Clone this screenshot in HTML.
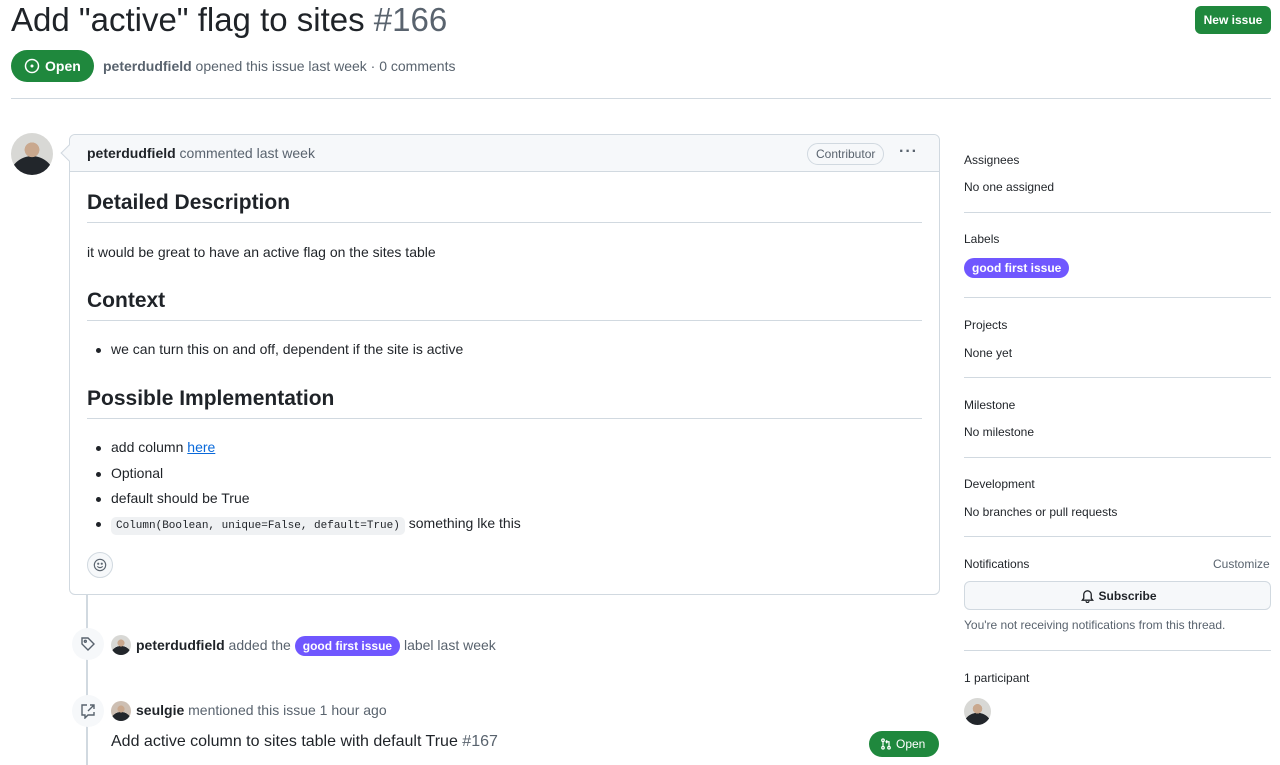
<!DOCTYPE html>
<html><head><meta charset="utf-8"><style>
*{box-sizing:border-box;margin:0;padding:0}
body{width:1280px;height:765px;overflow:hidden;background:#fff;font-family:"Liberation Sans",sans-serif;color:#1f2328;position:relative;font-size:14px}
.a{position:absolute;white-space:nowrap}
.g{color:#59636e}
b{font-weight:bold}
.lbl{background:#7057ff;color:#fff;border-radius:10px;font-size:12px;font-weight:bold;padding:2px 8px;display:inline-block;line-height:16px}
.av{border-radius:50%;background:radial-gradient(circle at 50% 40%,#c9a88e 0 22%,transparent 23%),radial-gradient(circle at 50% 110%,#22262b 0 45%,transparent 46%),#d8d8d5}
.hr{position:absolute;height:1px;background:#d1d9e0}
.sh{position:absolute;left:964px;font-size:12px;color:#1f2328}
.sv{position:absolute;left:964px;font-size:12px;color:#1f2328}
h2{position:absolute;left:87px;font-size:21px;font-weight:bold}
li{position:absolute;left:111px;font-size:14px;list-style:none}
li:before{content:"";position:absolute;left:-15px;top:7px;width:5px;height:5px;border-radius:50%;background:#1f2328}
code{font-family:"Liberation Mono",monospace;font-size:11px;background:#eff1f3;padding:3px 5px;border-radius:5px}
</style></head><body>
<div class="a" style="left:11px;top:1px;font-size:33px;">Add "active" flag to sites <span class="g" style="font-weight:300">#166</span></div>
<div class="a" style="left:1195px;top:6px;width:76px;height:28px;background:#1f883d;color:#fff;border-radius:6px;font-size:12px;font-weight:bold;text-align:center;line-height:28px">New issue</div>
<div class="a" style="left:11px;top:50px;width:83px;height:32px;background:#1f883d;border-radius:16px;color:#fff;font-weight:bold;font-size:14px;line-height:32px;padding-left:34px">Open
<svg style="position:absolute;left:13px;top:8px" width="16" height="16" viewBox="0 0 16 16"><circle cx="8" cy="8" r="6.5" fill="none" stroke="#fff" stroke-width="1.5"/><circle cx="8" cy="8" r="1.5" fill="#fff"/></svg></div>
<div class="a g" style="left:103px;top:58px;font-size:14px"><b style="color:#59636e">peterdudfield</b> opened this issue last week · 0 comments</div>
<div class="hr" style="left:11px;top:98px;width:1260px"></div>

<div class="a av" style="left:11px;top:133px;width:42px;height:42px"></div>
<div class="a" style="left:69px;top:134px;width:871px;height:461px;border:1px solid #d1d9e0;border-radius:6px"></div>
<div class="a" style="left:70px;top:135px;width:869px;height:37px;background:#f6f8fa;border-bottom:1px solid #d1d9e0;border-radius:6px 6px 0 0"></div>
<div class="a" style="left:63px;top:147px;width:12px;height:12px;background:#f6f8fa;border-left:1px solid #d1d9e0;border-bottom:1px solid #d1d9e0;transform:rotate(45deg)"></div>
<div class="a g" style="left:87px;top:145px"><b style="color:#1f2328">peterdudfield</b> commented last week</div>
<div class="a g" style="left:807px;top:143px;height:22px;border:1px solid #d1d9e0;border-radius:11px;font-size:12px;padding:0 8px;line-height:20px">Contributor</div>
<div class="a" style="left:899px;top:143px;font-size:16px;font-weight:bold;color:#59636e;letter-spacing:1px">···</div>

<h2 style="top:191px">Detailed Description</h2>
<div class="hr" style="left:87px;top:222px;width:835px"></div>
<div class="a" style="left:87px;top:244px">it would be great to have an active flag on the sites table</div>
<h2 style="top:289px">Context</h2>
<div class="hr" style="left:87px;top:320px;width:835px"></div>
<li style="top:341px">we can turn this on and off, dependent if the site is active</li>
<h2 style="top:387px">Possible Implementation</h2>
<div class="hr" style="left:87px;top:418px;width:835px"></div>
<li style="top:439px">add column <span style="color:#0969da;text-decoration:underline">here</span></li>
<li style="top:465px">Optional</li>
<li style="top:490px">default should be True</li>
<li style="top:515px"><code>Column(Boolean, unique=False, default=True)</code> something lke this</li>
<div class="a" style="left:87px;top:552px;width:26px;height:26px;border:1px solid #d1d9e0;border-radius:13px;background:#f6f8fa"><svg style="position:absolute;left:5px;top:5px" width="14" height="14" viewBox="0 0 16 16" fill="none" stroke="#59636e" stroke-width="1.3"><circle cx="8" cy="8" r="6.5"/><path d="M5 9.5c1.5 2 4.5 2 6 0"/><circle cx="6" cy="6.5" r=".6" fill="#59636e"/><circle cx="10" cy="6.5" r=".6" fill="#59636e"/></svg></div>

<div class="a" style="left:86px;top:595px;width:2px;height:170px;background:#d1d9e0"></div>
<div class="a" style="left:72px;top:628px;width:32px;height:32px;border-radius:50%;background:#f6f8fa"><svg style="position:absolute;left:8px;top:8px" width="16" height="16" viewBox="0 0 16 16" fill="none" stroke="#59636e" stroke-width="1.4"><path d="M2 2h6l6 6-6 6-6-6z"/><circle cx="5.3" cy="5.3" r="1"/></svg></div>
<div class="a av" style="left:111px;top:635px;width:20px;height:20px"></div>
<div class="a g" style="left:136px;top:636px"><b style="color:#1f2328">peterdudfield</b> added the <span class="lbl">good first issue</span> label last week</div>
<div class="a" style="left:72px;top:695px;width:32px;height:32px;border-radius:50%;background:#f6f8fa"><svg style="position:absolute;left:8px;top:8px" width="16" height="16" viewBox="0 0 16 16" fill="none" stroke="#59636e" stroke-width="1.4"><path d="M7 2H2v10h3v3l3-3h6V9M10 2h4v4M14 2L8 8"/></svg></div>
<div class="a av" style="left:111px;top:701px;width:20px;height:20px;background-color:#cdbfb3"></div>
<div class="a g" style="left:136px;top:702px"><b style="color:#1f2328">seulgie</b> mentioned this issue 1 hour ago</div>
<div class="a" style="left:111px;top:733px;font-size:16px">Add active column to sites table with default True <span class="g">#167</span></div>
<div class="a" style="left:869px;top:731px;width:70px;height:26px;background:#1f883d;border-radius:13px;color:#fff;font-size:12px;line-height:26px;padding-left:27px">Open<svg style="position:absolute;left:11px;top:7px" width="12" height="12" viewBox="0 0 16 16" fill="none" stroke="#fff" stroke-width="1.6"><circle cx="4" cy="3" r="1.7"/><circle cx="4" cy="13" r="1.7"/><circle cx="12" cy="13" r="1.7"/><path d="M4 5v6M12 11V5H8M9.5 3L8 5l1.5 2"/></svg></div>

<div class="sh" style="top:153px">Assignees</div>
<div class="sv" style="top:180px">No one assigned</div>
<div class="hr" style="left:964px;top:212px;width:307px"></div>
<div class="sh" style="top:232px">Labels</div>
<div class="a" style="left:964px;top:258px"><span class="lbl">good first issue</span></div>
<div class="hr" style="left:964px;top:297px;width:307px"></div>
<div class="sh" style="top:318px">Projects</div>
<div class="sv" style="top:346px">None yet</div>
<div class="hr" style="left:964px;top:377px;width:307px"></div>
<div class="sh" style="top:398px">Milestone</div>
<div class="sv" style="top:425px">No milestone</div>
<div class="hr" style="left:964px;top:457px;width:307px"></div>
<div class="sh" style="top:477px">Development</div>
<div class="sv" style="top:505px">No branches or pull requests</div>
<div class="hr" style="left:964px;top:536px;width:307px"></div>
<div class="sh" style="top:557px">Notifications</div>
<div class="a g" style="left:1213px;top:557px;font-size:12px">Customize</div>
<div class="a" style="left:964px;top:581px;width:307px;height:29px;border:1px solid #d1d9e0;border-radius:6px;background:#f6f8fa;font-size:12px;font-weight:bold;text-align:center;line-height:28px;padding-left:20px">Subscribe<svg style="position:absolute;left:115px;top:6px" width="15" height="15" viewBox="0 0 16 16" fill="none" stroke="#1f2328" stroke-width="1.4"><path d="M4 11V7a4 4 0 018 0v4l1.5 2h-11zM6.5 14a1.5 1.5 0 003 0"/></svg></div>
<div class="a g" style="left:964px;top:618px;font-size:12px">You're not receiving notifications from this thread.</div>
<div class="hr" style="left:964px;top:650px;width:307px"></div>
<div class="sh" style="top:671px">1 participant</div>
<div class="a av" style="left:964px;top:698px;width:27px;height:27px"></div>
</body></html>
